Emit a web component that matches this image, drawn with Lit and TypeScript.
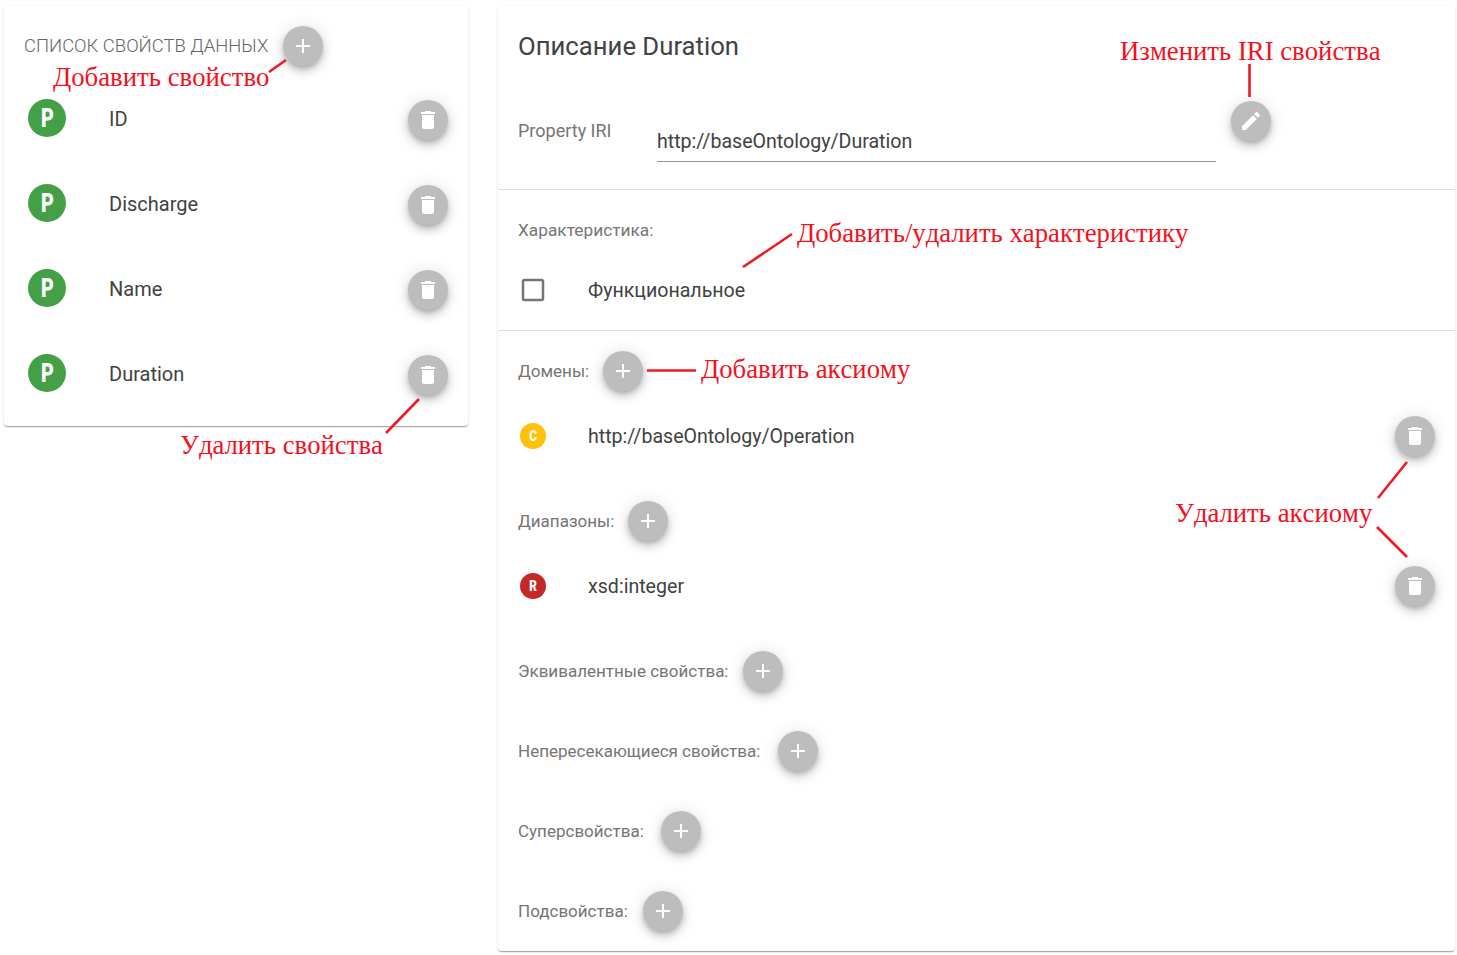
import { LitElement, html, css, svg } from "lit"
import { customElement } from "lit/decorators.js"

const ICONS = {
  plus: "M19 13h-6v6h-2v-6H5v-2h6V5h2v6h6v2z",
  del: "M6 19c0 1.1.9 2 2 2h8c1.1 0 2-.9 2-2V7H6v12zM19 4h-3.5l-1-1h-5l-1 1H5v2h14V4z",
  edit: "M3 17.25V21h3.75L17.81 9.94l-3.75-3.75L3 17.25zM20.71 7.04c.39-.39.39-1.02 0-1.41l-2.34-2.34c-.39-.39-1.02-.39-1.41 0l-1.83 1.83 3.75 3.75 1.83-1.83z",
  box: "M19 5v14H5V5h14m0-2H5c-1.1 0-2 .9-2 2v14c0 1.1.9 2 2 2h14c1.1 0 2-.9 2-2V5c0-1.1-.9-2-2-2z",
}

const PROPS = ["ID", "Discharge", "Name", "Duration"]
// label text and the width it takes, the add button sits right after it
const LOWER: [string, number][] = [
  ["Эквивалентные свойства:", 210],
  ["Непересекающиеся свойства:", 245],
  ["Суперсвойства:", 128],
  ["Подсвойства:", 110],
]

// red annotation strokes drawn over the screenshot
const LINES = [
  [269, 72, 286, 60],
  [386, 433, 419, 399],
  [1249.5, 64, 1249.5, 97],
  [743, 267, 792, 234],
  [647, 370.5, 696, 370.5],
  [1378, 498, 1407, 462],
  [1377, 527, 1407, 557],
]

@customElement("app-root")
export class AppRoot extends LitElement {
  static styles = css`
    :host {
      display: block;
      position: relative;
      width: 1457px;
      height: 955px;
      overflow: hidden;
      background: #fff;
      font-family: Roboto, sans-serif;
    }
    * {
      box-sizing: border-box;
    }
    .page {
      display: flex;
      align-items: flex-start;
      gap: 30px;
      padding: 6px 2px 4px 4px;
    }
    .card {
      background: #fff;
      border-radius: 4px;
      box-shadow: 0 2px 1px -1px rgba(0, 0, 0, 0.2), 0 1px 1px 0 rgba(0, 0, 0, 0.14), 0 1px 3px 0 rgba(0, 0, 0, 0.12);
    }
    .left {
      width: 464px;
      height: 420px;
      padding: 20px 20px 10px 24px;
    }
    .right {
      width: 957px;
      height: 945px;
    }
    .list-head {
      display: flex;
      align-items: center;
      gap: 15px;
      height: 40px;
      margin-bottom: 9px;
    }
    .list-title {
      margin-left: -4px;
      font-size: 18.45px;
      font-weight: 300;
      color: #666;
      text-transform: uppercase;
      white-space: nowrap;
    }
    .prop {
      display: flex;
      align-items: center;
      height: 85px;
    }
    .prop .name {
      flex: 1;
      margin: 3px 0 0 43px;
      font-size: 20px;
      color: #424242;
    }
    .prop .fab {
      margin-top: 5px;
    }
    .fab {
      flex: none;
      display: flex;
      align-items: center;
      justify-content: center;
      width: 40px;
      height: 40px;
      border-radius: 50%;
      background: #bdbdbd;
      box-shadow: 0 3px 5px -1px rgba(0, 0, 0, 0.2), 0 6px 10px 0 rgba(0, 0, 0, 0.14), 0 1px 18px 0 rgba(0, 0, 0, 0.12);
    }
    .fab svg {
      width: 24px;
      height: 24px;
      fill: #fff;
    }
    .avatar {
      flex: none;
      display: flex;
      align-items: center;
      justify-content: center;
      padding-top: 1px;
      border-radius: 50%;
      color: #fff;
      font-weight: 900;
      line-height: 1;
    }
    .avatar span {
      display: block;
      transform: scaleX(0.76);
    }
    .avatar.big {
      width: 38px;
      height: 38px;
      font-size: 26px;
    }
    .avatar.small {
      width: 26px;
      height: 26px;
      font-size: 15.5px;
    }
    .green {
      background: #43a047;
    }
    .amber {
      background: #ffc107;
    }
    .red {
      background: #c62828;
    }
    .head {
      height: 184px;
      padding: 20px 20px 0;
      border-bottom: 1px solid #e0e0e0;
    }
    .head h2 {
      margin: 0;
      font-size: 25.7px;
      font-weight: 400;
      line-height: 40px;
      color: #424242;
    }
    .iri {
      display: flex;
      align-items: flex-start;
      margin-top: 35px;
    }
    .iri .label {
      width: 139px;
      margin-top: 20px;
      font-size: 18px;
    }
    .field {
      width: 559px;
      height: 61px;
      margin-right: 15px;
      padding-top: 29px;
      border-bottom: 1px solid #949494;
      font-size: 19.6px;
      line-height: 24px;
      color: #424242;
    }
    .label {
      flex: none;
      font-size: 17px;
      line-height: 20px;
      font-weight: 400;
      color: #757575;
      white-space: nowrap;
    }
    .trait {
      height: 141px;
      padding: 30px 20px 0;
      border-bottom: 1px solid #e0e0e0;
    }
    .trait .label {
      font-size: 17.3px;
    }
    .trait .item {
      margin-top: 25px;
    }
    .axioms {
      padding: 0 20px;
    }
    .axiom-head {
      display: flex;
      align-items: center;
      gap: 15px;
      height: 80px;
    }
    .item {
      display: flex;
      align-items: center;
      height: 50px;
    }
    .axioms .item {
      margin-bottom: 20px;
    }
    .slot {
      flex: none;
      display: flex;
      justify-content: center;
      width: 30px;
      margin-right: 40px;
    }
    .checkbox {
      width: 30px;
      height: 30px;
      fill: #757575;
    }
    .item .text {
      flex: 1;
      font-size: 19.6px;
      color: #424242;
    }
    .overlay {
      position: absolute;
      top: 0;
      left: 0;
      pointer-events: none;
    }
    .overlay line {
      stroke: #ed1c24;
      stroke-width: 2.6;
    }
    .note {
      position: absolute;
      font-family: "Liberation Serif", serif;
      font-size: 26.75px;
      line-height: 32px;
      font-kerning: none;
      color: #f5101c;
      white-space: nowrap;
    }
    .n-add-prop { left: 53px; top: 61px; }
    .n-del-prop { left: 180px; top: 429px; }
    .n-iri { left: 1120px; top: 35px; }
    .n-trait { left: 797px; top: 217px; }
    .n-add-axiom { left: 701px; top: 353px; }
    .n-del-axiom { left: 1175px; top: 497px; }
  `

  private fab(icon: string) {
    return html`<div class="fab"><svg viewBox="0 0 24 24"><path d=${icon}></path></svg></div>`
  }

  private axiomHead(label: string, width: number) {
    return html`
      <div class="axiom-head">
        <span class="label" style="width:${width}px">${label}</span>
        ${this.fab(ICONS.plus)}
      </div>
    `
  }

  private axiomItem(letter: string, color: string, text: string) {
    return html`
      <div class="item">
        <div class="slot"><div class="avatar small ${color}"><span>${letter}</span></div></div>
        <div class="text">${text}</div>
        ${this.fab(ICONS.del)}
      </div>
    `
  }

  render() {
    return html`
      <div class="page">
        <section class="card left">
          <div class="list-head">
            <span class="list-title">Список свойств данных</span>
            ${this.fab(ICONS.plus)}
          </div>
          ${PROPS.map(
            (p) => html`
              <div class="prop">
                <div class="avatar big green"><span>P</span></div>
                <div class="name">${p}</div>
                ${this.fab(ICONS.del)}
              </div>
            `
          )}
        </section>

        <section class="card right">
          <div class="head">
            <h2>Описание Duration</h2>
            <div class="iri">
              <span class="label">Property IRI</span>
              <div class="field">http://baseOntology/Duration</div>
              ${this.fab(ICONS.edit)}
            </div>
          </div>
          <div class="trait">
            <div class="label">Характеристика:</div>
            <div class="item">
              <div class="slot"><svg class="checkbox" viewBox="0 0 24 24"><path d=${ICONS.box}></path></svg></div>
              <div class="text">Функциональное</div>
            </div>
          </div>
          <div class="axioms">
            ${this.axiomHead("Домены:", 70)}
            ${this.axiomItem("C", "amber", "http://baseOntology/Operation")}
            ${this.axiomHead("Диапазоны:", 95)}
            ${this.axiomItem("R", "red", "xsd:integer")}
            ${LOWER.map(([l, w]) => this.axiomHead(l, w))}
          </div>
        </section>
      </div>

      <svg class="overlay" width="1457" height="955">
        ${LINES.map(([x1, y1, x2, y2]) => svg`<line x1=${x1} y1=${y1} x2=${x2} y2=${y2}></line>`)}
      </svg>
      <div class="note n-add-prop">Добавить свойство</div>
      <div class="note n-del-prop">Удалить свойства</div>
      <div class="note n-iri">Изменить IRI свойства</div>
      <div class="note n-trait">Добавить/удалить характеристику</div>
      <div class="note n-add-axiom">Добавить аксиому</div>
      <div class="note n-del-axiom">Удалить аксиому</div>
    `
  }
}
